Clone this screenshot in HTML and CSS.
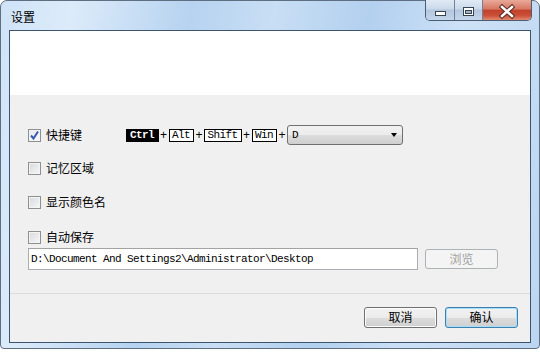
FILE: index.html
```html
<!DOCTYPE html>
<html lang="zh-CN">
<head>
    <meta charset="UTF-8">
    <title>设置</title>
    <link rel="stylesheet" href="styles.css">
</head>
<body>
    <div class="window">
        <!-- Title Bar -->
        <div class="titlebar">
            <span class="title">设置</span>
            <div class="caption-buttons">
                <div class="cap-btn cap-min">
                    <svg width="28" height="20" viewBox="0 0 28 20">
                        <rect x="9.5" y="11.5" width="10" height="4" fill="#fff" stroke="#39434f"/>
                    </svg>
                </div>
                <div class="cap-btn cap-max">
                    <svg width="27" height="20" viewBox="0 0 27 20">
                        <rect x="8.5" y="7.5" width="10" height="8" fill="#fff" stroke="#39434f"/>
                        <rect x="10.5" y="10.5" width="6" height="3" fill="#9fb3c9" stroke="#39434f"/>
                    </svg>
                </div>
                <div class="cap-btn cap-close">
                    <svg width="48" height="20" viewBox="0 0 48 20">
                        <path d="M19 7 L29 16 M29 7 L19 16" stroke="#5a2a22" stroke-width="4.5" stroke-linecap="square"/>
                        <path d="M19 7 L29 16 M29 7 L19 16" stroke="#fff" stroke-width="2.5" stroke-linecap="square"/>
                    </svg>
                </div>
            </div>
        </div>

        <!-- Client Area -->
        <div class="client">
            <div class="header"></div>

            <div class="panel">
                <div class="row">
                    <span class="check checked">
                        <svg width="11" height="11" viewBox="0 0 11 11">
                            <path d="M2 5.5 L4.5 8.5 L9 1.5" fill="none" stroke="#3b5bb0" stroke-width="2"/>
                        </svg>
                    </span>
                    <span class="label">快捷键</span>
                    <div class="keys">
                        <span class="key key-on">Ctrl</span>
                        <span class="plus">+</span>
                        <span class="key">Alt</span>
                        <span class="plus">+</span>
                        <span class="key">Shift</span>
                        <span class="plus">+</span>
                        <span class="key">Win</span>
                        <span class="plus">+</span>
                        <div class="combo">
                            <span>D</span>
                            <span class="arrow"></span>
                        </div>
                    </div>
                </div>

                <div class="row row-2">
                    <span class="check"></span>
                    <span class="label">记忆区域</span>
                </div>

                <div class="row row-3">
                    <span class="check"></span>
                    <span class="label">显示颜色名</span>
                </div>

                <div class="row row-4">
                    <span class="check"></span>
                    <span class="label">自动保存</span>
                </div>

                <div class="path-row">
                    <div class="path-input">D:\Document And Settings2\Administrator\Desktop</div>
                    <div class="btn btn-disabled">浏览</div>
                </div>
            </div>

            <!-- Bottom Buttons -->
            <div class="footer">
                <div class="btn">取消</div>
                <div class="btn btn-default">确认</div>
            </div>
        </div>
    </div>
</body>
</html>
```

FILE: styles.css
```css
/* General Styling */
body {
    margin: 0;
    padding: 0;
    background: #fff;
    font-family: "Noto Sans CJK SC", "Liberation Sans", sans-serif;
    font-size: 12px;
    color: #000;
}

/* Window Frame */
.window {
    box-sizing: border-box;
    width: 540px;
    height: 349px;
    border: 1px solid #5f6f82;
    border-radius: 7px 7px 4px 4px;
    padding: 0 8px 5px 8px;
    display: flex;
    flex-direction: column;
    background: linear-gradient(100deg, #cfe3f7 0%, #dcebfa 12%, #b7d3f0 32%, #c8def4 46%, #b3d0ef 62%, #cde1f6 78%, #bcd6f1 100%);
}

.titlebar {
    height: 29px;
    display: flex;
    justify-content: space-between;
    align-items: flex-start;
}

.title {
    padding: 9px 0 0 2px;
    line-height: 14px;
}

/* Caption Buttons */
.caption-buttons {
    display: flex;
    margin-top: -1px;
    margin-right: -1px;
    border: 1px solid #4c5d72;
    border-top: none;
    border-radius: 0 0 5px 5px;
    overflow: hidden;
    height: 20px;
}

.cap-btn {
    height: 20px;
}

.cap-min, .cap-max {
    width: 28px;
    border-right: 1px solid #6f8299;
    background: linear-gradient(#e0eaf5, #cbd9ea 45%, #b4c7de 50%, #c4d6ea);
}

.cap-max {
    width: 27px;
}

.cap-close {
    width: 48px;
    background: linear-gradient(#e9a99a, #d77763 45%, #c2412b 52%, #cc5039 78%, #e08a6f);
}

.cap-btn svg {
    display: block;
}

/* Client Area */
.client {
    flex: 1;
    display: flex;
    flex-direction: column;
    border: 1px solid #3d5470;
    background: #f0f0f0;
}

.header {
    height: 64px;
    background: #fff;
}

.panel {
    flex: 1;
    padding: 30px 0 0 18px;
}

.row {
    height: 20px;
    display: flex;
    align-items: center;
}

.row-2 {
    margin-top: 13px;
}

.row-3 {
    margin-top: 14px;
}

.row-4 {
    margin-top: 15px;
}

/* Checkbox Styling */
.check {
    box-sizing: border-box;
    width: 13px;
    height: 13px;
    border: 1px solid #8e8f8f;
    background: linear-gradient(135deg, #d6d9de, #f7f7f7);
    box-shadow: inset 0 0 0 1px #f4f4f4;
    display: flex;
    align-items: center;
    justify-content: center;
}

.check.checked {
    background: linear-gradient(135deg, #e6e8ec, #fbfbfb);
}

.label {
    margin-left: 5px;
    line-height: 14px;
}

/* Hotkey Keys */
.keys {
    display: flex;
    align-items: center;
    margin-left: 44px;
}

.key {
    font-family: "Liberation Mono", monospace;
    font-size: 11px;
    letter-spacing: -0.6px;
    line-height: 11px;
    height: 11px;
    padding: 0 3px 0 2.5px;
    border: 1px solid #000;
    background: #fff;
}

.key-on {
    background: #000;
    color: #fff;
    font-weight: bold;
    padding: 0 3.5px 0 3px;
}

.plus {
    width: 10px;
    text-align: center;
    font-family: "Liberation Sans", sans-serif;
    font-size: 12px;
}

.combo {
    box-sizing: border-box;
    width: 116px;
    height: 20px;
    border: 1px solid #707070;
    border-radius: 3px;
    background: linear-gradient(#f2f2f2, #ebebeb 50%, #dddddd 50%, #cfcfcf);
    display: flex;
    align-items: center;
    justify-content: space-between;
    padding: 0 5px 0 4px;
    font-family: "Liberation Mono", monospace;
    font-size: 11px;
}

.arrow {
    width: 0;
    height: 0;
    border-left: 3.5px solid transparent;
    border-right: 3.5px solid transparent;
    border-top: 4px solid #000;
}

/* Path Field */
.path-row {
    display: flex;
    align-items: center;
    margin-top: 1px;
}

.path-input {
    box-sizing: border-box;
    width: 390px;
    height: 22px;
    border: 1px solid #abadb3;
    border-top-color: #a3a3a3;
    background: #fff;
    padding: 0 2px;
    font-family: "Liberation Mono", monospace;
    font-size: 11px;
    letter-spacing: -0.6px;
    line-height: 20px;
}

/* Buttons */
.btn {
    box-sizing: border-box;
    width: 73px;
    height: 21px;
    border: 1px solid #707070;
    border-radius: 3px;
    background: linear-gradient(#f2f2f2, #ebebeb 50%, #dddddd 50%, #cfcfcf);
    box-shadow: inset 0 0 0 1px #fcfcfc;
    text-align: center;
    line-height: 18px;
}

.btn-disabled {
    margin-left: 7px;
    height: 20px;
    border-color: #adb2b5;
    background: #f4f4f4;
    box-shadow: none;
    color: #a0a0a0;
}

.btn-default {
    border-color: #3c7fb1;
    box-shadow: inset 0 0 0 1px #a6dff8;
}

.footer {
    height: 49px;
    border-top: 1px solid #dcdcdc;
    display: flex;
    justify-content: flex-end;
    align-items: flex-start;
    gap: 8px;
    padding: 13px 12px 0 0;
    box-sizing: border-box;
}
```
